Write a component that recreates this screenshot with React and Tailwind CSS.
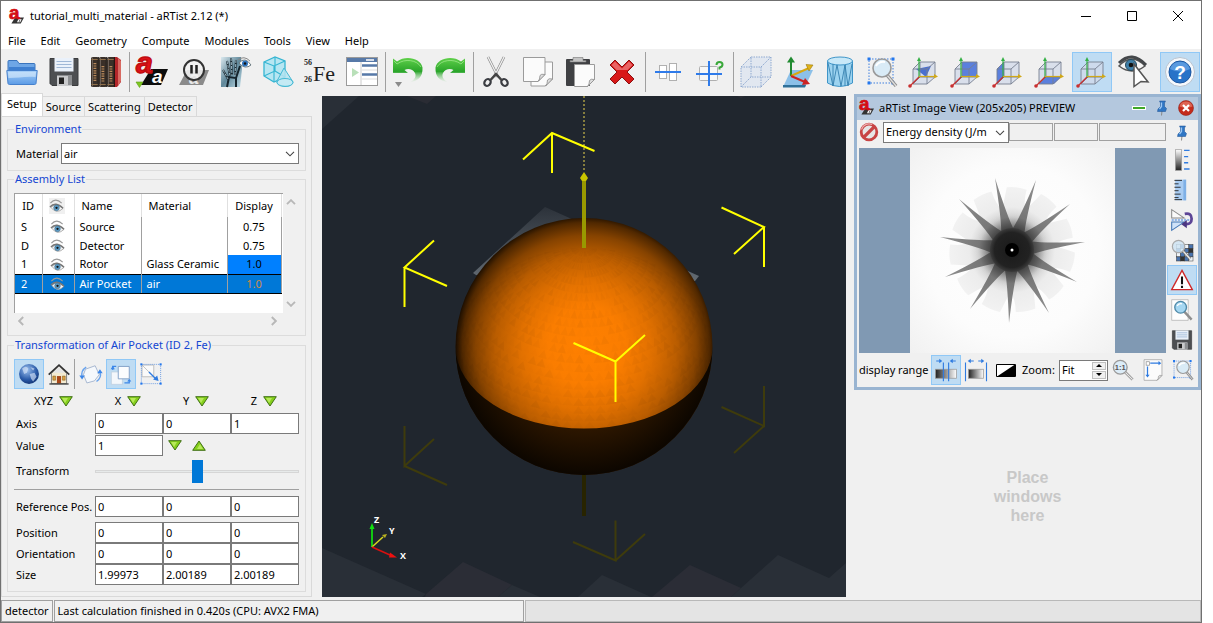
import React from "react";

/* ---------- icons ---------- */

function Svg({ size = 32, children, box = "0 0 32 32" }) {
  return (
    <svg width={size} height={size} viewBox={box} fill="none" aria-hidden="true" className="block shrink-0 overflow-visible">
      {children}
    </svg>
  );
}

function LogoIcon({ size = 16 }) {
  return (
    <Svg size={size}>
      <path d="M13 18h19l-7 13H5z" fill="#333" />
      <path d="M20 22h7l-3 6h-7z" fill="#fff" />
      <path d="M22 24h2l-1.500 3h-2z" fill="#333" />
      <text x="0" y="22" fontFamily="Liberation Sans, sans-serif" fontSize="40" fontWeight="bold" fill="#d40d12" stroke="#d40d12" strokeWidth="1.500">a</text>
    </Svg>
  );
}

function FolderIcon() {
  return (
    <Svg>
      <defs>
        <linearGradient id="fold" x1="0" y1="0" x2="0" y2="1">
          <stop offset="0" stopColor="#a9d0f7" />
          <stop offset="1" stopColor="#5b9be6" />
        </linearGradient>
      </defs>
      <path d="M2 16V5.500a1 1 0 0 1 1-1h8l2 3h15a1 1 0 0 1 1 1V16z" fill="#6ea6e6" stroke="#3a74bd" />
      <path d="M3 11h26v3H3z" fill="#3f7fd0" />
      <path d="M.8 14.500h30.400L30 27.500a1.500 1.500 0 0 1-1.500 1h-25A1.500 1.500 0 0 1 2 27.500z" fill="url(#fold)" stroke="#4580cc" />
      <path d="M2 16h28l-.5 5C20 20 12 22 2.500 22z" fill="#cfe5fb" opacity=".7" />
    </Svg>
  );
}

function FloppyIcon({ size = 32 }) {
  return (
    <Svg size={size}>
      <path d="M2 2.500h28v27H4L2 27.500z" fill="#4d4f52" stroke="#3b3c3e" />
      <path d="M6.500 2h19v13.500h-19z" fill="#eaf1fa" />
      <path d="M8.500 5.500h15M8.500 8.500h15M8.500 11.500h15" stroke="#9fb7d6" strokeWidth="1.200" />
      <path d="M9 19.500h15V30H9z" fill="#c9cacc" />
      <path d="M11 21.500h5V28h-5z" fill="#222" />
      <path d="M20 20h4v9h-4z" fill="#8b8d90" />
    </Svg>
  );
}

function BooksIcon() {
  return (
    <Svg>
      <path d="M23 1h4l4 3v22l-4 5h-4z" fill="#b3262a" />
      <path d="M28 2l3 3v20l-3 5z" fill="#d86a62" />
      {[1, 9, 17].map((x) => (
        <g key={x}>
          <rect x={x} y="1" width="7.500" height="30" rx="1.500" fill="#3a3029" />
          <path d={`M${x + 1.5} 1.500v29`} stroke="#6b6058" strokeWidth="1" />
          <path d={`M${x + 0.5} 3.500h6.500M${x + 0.5} 28.500h6.500`} stroke="#8f6f4a" />
          <path d={`M${x + 3.900} ${x === 1 ? 7 : 10}v${x === 1 ? 19 : 16}`} stroke="#b98a5c" strokeWidth="2.800" strokeDasharray="1.200 1.200" />
          <path d={`M${x + 7.300} 1v30`} stroke="#15100c" />
        </g>
      ))}
    </Svg>
  );
}

function RunIcon() {
  return (
    <Svg>
      <path d="M15 13h17l-7 16H5z" fill="#0d0d0d" />
      <text x="16" y="27" fontFamily="Liberation Sans, sans-serif" fontSize="19" fontWeight="bold" fontStyle="italic" fill="#fff">a</text>
      <text x="0" y="17" fontFamily="Liberation Sans, sans-serif" fontSize="30" fontWeight="bold" fontStyle="italic" fill="#e01217" stroke="#c00d12" strokeWidth="1.500">a</text>
      <path d="M0 26h7l-3.500 5.500z" fill="#7ec820" stroke="#5a9a14" strokeWidth=".6" />
    </Svg>
  );
}

function PauseIcon() {
  return (
    <Svg>
      <path d="M9 14h22l-6 15H1z" fill="#8b8b8b" />
      <text x="11" y="28" fontFamily="Liberation Sans, sans-serif" fontSize="18" fontWeight="bold" fontStyle="italic" fill="#e9e9e9">a</text>
      <circle cx="16" cy="14" r="10" fill="#f3f3f3" fillOpacity=".85" stroke="#333" strokeWidth="2" />
      <path d="M13.500 9v8.500M18.500 9v8.500" stroke="#222" strokeWidth="2.500" />
    </Svg>
  );
}

function XrayIcon() {
  return (
    <Svg>
      <defs>
        <linearGradient id="xr" x1="0" y1="0" x2="1" y2="1">
          <stop offset="0" stopColor="#dbe9ef" />
          <stop offset=".5" stopColor="#5f8799" />
          <stop offset="1" stopColor="#c3dfea" />
        </linearGradient>
      </defs>
      <path d="M1 1h20l1 12-2 18H1z" fill="url(#xr)" />
      <path d="M3 14l5 9M7 5l3 15M11 2l1 17M16 4l-1 15M20 10l-4 12M7 31l2-10 7 1v9" stroke="#15242c" strokeWidth="2" />
      <path d="M3 14l5 9M7 5l3 15M11 2l1 17M16 4l-1 15" stroke="#bcd7e3" strokeWidth=".8" strokeDasharray="3 1" />
      <path d="M19 7q6-7 12 2-6 5-12-2z" fill="#fff" stroke="#6b7a80" />
      <circle cx="25" cy="7.500" r="3" fill="#2f74bd" />
      <circle cx="25" cy="7.500" r="1.200" fill="#111" />
      <path d="M18 4q6-5 12 1" stroke="#888" />
    </Svg>
  );
}

function SolidsIcon() {
  return (
    <Svg>
      <path d="M2 6l11-5 10 4v16l-11 5-10-6z" fill="#a9e3f2" fillOpacity=".8" stroke="#35b5d2" strokeWidth="1.300" />
      <path d="M2 6l10 4 11-5M12 10v16M13 1v14L2 20M13 15l10 6" stroke="#35b5d2" strokeWidth="1.100" />
      <path d="M22 12l9 14q-1 5-9 4-8-1-7-5z" fill="#b5e4f1" fillOpacity=".85" stroke="#45b9d4" />
      <ellipse cx="23" cy="26.500" rx="8" ry="4" stroke="#45b9d4" fill="#c8edf6" fillOpacity=".6" />
    </Svg>
  );
}

function IronIcon() {
  return (
    <Svg>
      <text x="0" y="9" fontFamily="Liberation Serif, serif" fontSize="8" fontWeight="bold" fill="#222">56</text>
      <text x="0" y="26" fontFamily="Liberation Serif, serif" fontSize="8" fontWeight="bold" fill="#222">26</text>
      <text x="9" y="25" fontFamily="Liberation Serif, serif" fontSize="22" fill="#222">Fe</text>
    </Svg>
  );
}

function ListWinIcon() {
  return (
    <Svg>
      <rect x=".5" y="1.500" width="31" height="28" fill="#fff" stroke="#9a9a9a" />
      <path d="M1 2h30v4H1z" fill="#5779a8" />
      <path d="M20 4h8" stroke="#fff" strokeWidth="1.500" />
      <path d="M15 6v23" stroke="#ccc" />
      <path d="M6 12v9l7-4.500z" fill="#b9e0b9" />
      <path d="M16 9.500h15M16 18.500h15" stroke="#5779a8" strokeWidth="2.500" />
      <path d="M16 14h15M16 23h15" stroke="#ddd" />
    </Svg>
  );
}

function UndoIcon({ flip }) {
  const id = flip ? "redo" : "undo";
  return (
    <Svg>
      <defs>
        <linearGradient id={id} x1="0" y1="0" x2="0" y2="1">
          <stop offset="0" stopColor="#5fd04a" />
          <stop offset=".55" stopColor="#2aa52a" />
          <stop offset="1" stopColor="#9fd99f" stopOpacity="0" />
        </linearGradient>
      </defs>
      <g transform={flip ? "translate(32 0) scale(-1 1)" : ""}>
        <path d="M1 2.500l4 3c9-7 24-3 25.500 6C31 21 26 25 18 26.500c5-3 6.500-6 5-9.500-2-4-7-5-10.500-3l3.500 3H1z" fill={`url(#${id})`} />
        <path d="M2 5l3 3c8-6 20-4 24 3" stroke="#a5eb92" opacity=".7" />
        {!flip && <path d="M3 26h7l-3.500 5z" fill="#8b8b8b" />}
      </g>
    </Svg>
  );
}

function CutIcon() {
  return (
    <Svg>
      <path d="M8 1l10 20M24 1L14 21" stroke="#888" strokeWidth="2.600" />
      <path d="M8 1l10 20M24 1L14 21" stroke="#f2f2f2" strokeWidth="1.300" />
      <ellipse cx="7.500" cy="26.500" rx="3" ry="3.600" transform="rotate(35 7.500 26.500)" stroke="#3b3d42" strokeWidth="2.200" />
      <ellipse cx="24.500" cy="26.500" rx="3" ry="3.600" transform="rotate(-35 24.500 26.500)" stroke="#3b3d42" strokeWidth="2.200" />
      <path d="M10.500 24l5.500-6 5.500 6" stroke="#444" strokeWidth="2.500" />
    </Svg>
  );
}

function Page({ x, y, w, h }) {
  return (
    <g>
      <path d={`M${x} ${y}h${w}v${h - 7}l-7 7H${x}z`} fill="#fbfbfb" stroke="#9b9b9b" />
      <path d={`M${x + w} ${y + h - 7}q-4-1-5 1 0 4-2 6z`} fill="#ddd" stroke="#8b8b8b" strokeWidth=".8" />
    </g>
  );
}

function CopyIcon() {
  return (
    <Svg>
      <Page x={9} y={6} w={21.5} h={24} />
      <Page x={1.5} y={1.5} w={21.5} h={24} />
    </Svg>
  );
}

function PasteIcon() {
  return (
    <Svg>
      <rect x="2" y="3" width="24" height="27" rx="1" fill="#3f4043" />
      <path d="M9 1.500h10v3h3V6H6V4.500h3z" fill="#c4c4c4" stroke="#777" strokeWidth=".6" />
      <Page x={10.5} y={8.500} w={20} h={22} />
    </Svg>
  );
}

function DeleteIcon() {
  return (
    <Svg>
      <path d="M9 4l7 7 7-7 5 5-7 7 7 7-5 5-7-7-7 7-5-5 7-7-7-7z" fill="#d81818" stroke="#8c1010" strokeLinejoin="round" />
      <path d="M9 5.500l7 7 7-7 3.500 3.500-5 5h-11l-5-5z" fill="#f59a9a" opacity=".6" />
    </Svg>
  );
}

function AlignIcon() {
  return (
    <Svg>
      <rect x="7.500" y="9.500" width="7" height="13" fill="#fff" stroke="#b0b0b0" />
      <rect x="17.500" y="7.500" width="7" height="17" fill="#fff" stroke="#b0b0b0" />
      <path d="M3 16h26" stroke="#2f7bea" strokeWidth="2" />
    </Svg>
  );
}

function CenterIcon() {
  return (
    <Svg>
      <rect x="5.500" y="10.500" width="18" height="14" rx="1" fill="#f7f7f7" stroke="#b0b0b0" />
      <path d="M2 18h26M15 5v25" stroke="#2f7bea" strokeWidth="2" />
      <path d="M22.500 9q0-3 3-3t3 2.500q0 2.500-3 3v2" stroke="#3aa83a" strokeWidth="2" />
    </Svg>
  );
}

function WireBoxIcon() {
  return (
    <Svg>
      <path d="M1 11l10-10h20v20L21 31H1z" fill="#dde5f0" opacity=".8" />
      <path d="M1 11h20v20H1zM11 1h20v20H11zM1 11L11 1M21 11L31 1M21 31l10-10M1 31l10-10" stroke="#8fa9d0" strokeDasharray="1.500 1" />
    </Svg>
  );
}

function AxesIcon() {
  return (
    <Svg>
      <path d="M9 14h22l-8 17H1z" fill="#8cc0e8" />
      <path d="M1 29h23l-1 2.500H1z" fill="#2f7099" />
      <path d="M9 20V4" stroke="#208a30" strokeWidth="2" />
      <path d="M5 6.500L9 .5l4 6z" fill="#208a30" />
      <path d="M9 20l18-8" stroke="#d7a810" strokeWidth="2" />
      <path d="M24 8.500l7 .5-4 6z" fill="#e0b21a" stroke="#8b6a00" strokeWidth=".5" />
      <path d="M9 20l14 6" stroke="#cc2222" strokeWidth="2.200" />
      <path d="M23 22l5 6-8 1z" fill="#cc2222" />
    </Svg>
  );
}

function CylinderIcon() {
  return (
    <Svg>
      <path d="M3.500 5v22q12 7 25 0V5z" fill="#9cd3f0" stroke="#3f95c8" />
      <ellipse cx="16" cy="5" rx="12.500" ry="4" fill="#c8e8f8" stroke="#3f95c8" />
      <path d="M4 7l5 23 4-21 4 21 4-21 3 21 4-22M9 8v22M21 9v21" stroke="#347fae" strokeWidth=".9" />
    </Svg>
  );
}

function Corners({ a = 3, b = 27 }) {
  return (
    <g>
      <path d={`M${a} ${a}H${b}V${b}H${a}z`} stroke="#3c7ede" strokeDasharray="1.500 1.500" />
      {[[a, a], [b, a], [a, b], [b, b]].map(([x, y]) => (
        <rect key={`${x}-${y}`} x={x - 1.5} y={y - 1.5} width="3" height="3" fill="#2277ee" />
      ))}
    </g>
  );
}

function ZoomBoxIcon({ size = 32 }) {
  return (
    <Svg size={size}>
      <Corners />
      <path d="M21 19l9 11" stroke="#8f8f8f" strokeWidth="3.500" />
      <path d="M21 19l9 11" stroke="#e0e0e0" strokeWidth="1.200" />
      <circle cx="16" cy="12" r="9" fill="#d9ebf6" stroke="#999" strokeWidth="1.600" />
      <path d="M10 10q3-5 9-4" stroke="#fff" strokeWidth="2" />
    </Svg>
  );
}

function CubeView({ face }) {
  return (
    <Svg>
      <path d="M5 13l7-7h15v15l-8 7H5z" fill="#d2dae9" opacity=".75" />
      {face === "dir" && <path d="M8 13l15-3-5 11z" fill="#4a6fd0" />}
      {face === "back" && <path d="M12 6h15v15H12z" fill="#5b80dd" />}
      {face === "left" && <path d="M5 13l7-7v15l-7 7z" fill="#5b80dd" />}
      {face === "bottom" && <path d="M5 28l7-7h15l-7 7z" fill="#5b80dd" />}
      <path d="M5 13h14v15H5zM12 6h15v15H12zM5 13l7-7M19 13l8-7M19 28l8-7M5 28l7-7" stroke="#777f90" strokeWidth=".9" />
      <path d="M11 22V4" stroke="#35b045" strokeWidth="1.200" />
      <path d="M9 5l2-4 2 4z" fill="#35b045" />
      <path d="M11 20.500h16" stroke="#d0a818" strokeWidth="1.200" />
      <path d="M26 18l4 2.500-4 2z" fill="#d0a818" />
      <path d="M11 21l-9 9" stroke="#c83030" strokeWidth="1.200" />
      <circle cx="2" cy="30" r="1.800" fill="#c83030" />
    </Svg>
  );
}

function EyeCursorIcon() {
  return (
    <Svg>
      <path d="M1 10Q14-4 27 10q-13 10-26 0z" fill="#f5f5f5" stroke="#555" strokeWidth="1.500" />
      <path d="M1 7Q14-6 28 9" stroke="#44474a" strokeWidth="3" />
      <circle cx="13" cy="9" r="5.500" fill="#3f7fa8" stroke="#27485a" />
      <circle cx="13" cy="9" r="2.300" fill="#111" />
      <path d="M16 8l14 18-7-.5-7 5z" fill="#fff" stroke="#555" strokeWidth="1.500" />
    </Svg>
  );
}

function HelpIcon() {
  return (
    <Svg>
      <circle cx="16" cy="16" r="14.500" fill="#f5f8fc" stroke="#b9c3cf" />
      <circle cx="16" cy="16" r="11" fill="#2873c8" stroke="#1b56a0" />
      <path d="M6 13a10.500 10.500 0 0 1 20 0q-10 5-20 0z" fill="#6ea9e8" opacity=".7" />
      <text x="16" y="23" textAnchor="middle" fontFamily="Liberation Sans, sans-serif" fontSize="19" fontWeight="bold" fill="#fff">?</text>
    </Svg>
  );
}

function EyeIcon() {
  return (
    <Svg size={15} box="0 0 16 16">
      <path d="M2 10Q8 4 15 11q-7 7-13-1z" fill="#f4f4f4" stroke="#999" strokeWidth=".8" />
      <path d="M1 9.500Q7 3 15 11" stroke="#777" strokeWidth="1.500" />
      <path d="M1.500 5.500Q7-1 13.500 5.500" stroke="#999" strokeWidth="1.200" />
      <circle cx="8" cy="10.500" r="3" fill="#5a9ac4" stroke="#3b6a8a" strokeWidth=".6" />
      <circle cx="8" cy="10.500" r="1.200" fill="#111" />
    </Svg>
  );
}

function GlobeIcon() {
  return (
    <Svg size={22}>
      <defs>
        <radialGradient id="globe" cx=".4" cy=".3" r=".8">
          <stop offset="0" stopColor="#9cc0ee" />
          <stop offset=".6" stopColor="#2a5aa8" />
          <stop offset="1" stopColor="#0d2a66" />
        </radialGradient>
      </defs>
      <circle cx="16" cy="16" r="14.500" fill="url(#globe)" />
      <path d="M6 8q6-5 9 0l-2 6-4 2zM17 16l7-2 3 6-5 7-3-4zM18 6l6 2-2 3z" fill="#d5e3f7" opacity=".65" />
    </Svg>
  );
}

function HomeIcon() {
  return (
    <Svg size={22}>
      <path d="M5 15L16 4l11 11v15H5z" fill="#f3ead0" stroke="#555" />
      <path d="M1 17L16 3l15 14" stroke="#333" strokeWidth="2.500" />
      <path d="M7 14l9-9 9 9z" fill="#e4e4e4" />
      <path d="M13 19h6v11h-6z" fill="#a8481a" />
      <path d="M7 19h4v6H7zM21 19h4v6h-4z" fill="#d9a040" stroke="#7a5012" strokeWidth=".7" />
      <path d="M2 30.500h28" stroke="#444" strokeWidth="2" />
    </Svg>
  );
}

function RotateIcon() {
  return (
    <Svg size={22}>
      <path d="M8 9l14-5 6 13-7 9-11 3-5-12z" fill="#f5f8fc" stroke="#9fb2cc" strokeWidth="1.300" />
      <path d="M3 20Q1 11 9 6M29 13q3 8-5 14" stroke="#68a3ee" strokeWidth="2" />
      <path d="M-1 18l8 0-4 6zM33 15h-8l4-6z" fill="#3c86e8" />
    </Svg>
  );
}

function MoveIcon() {
  return (
    <Svg size={22}>
      <path d="M2 13h16v18H2z" fill="#f4f7fb" stroke="#bccbdc" />
      <path d="M12 5h16v18H12z" fill="#fbfcfe" stroke="#7d9cc4" strokeWidth="1.300" />
      <path d="M4 10V5h5M28 25v4h-7" stroke="#3c86e8" strokeWidth="1.800" />
      <path d="M1 9l3-5 3 5zM25 27l3-4 3 4z" fill="#3c86e8" />
    </Svg>
  );
}

function ScaleIcon() {
  return (
    <Svg size={22}>
      <path d="M3 3h17v17H3z" fill="#fafafa" stroke="#aaa" />
      <Corners a={2} b={30} />
      <path d="M3 3l20 20" stroke="#aaa" />
      <path d="M13 13l11 11" stroke="#2f7be0" strokeWidth="2" />
      <path d="M27 26l-8-2 6-6z" fill="#2f7be0" />
    </Svg>
  );
}

function Tri({ up }) {
  return (
    <svg width="14" height="11" viewBox="0 0 14 11" aria-hidden="true" className={up ? "block rotate-180" : "block"}>
      <path d="M.7.7h12.600L7 10z" fill="#86d01c" stroke="#3f6f14" strokeLinejoin="round" />
      <path d="M3 2h6L6 7z" fill="#c3ef6a" opacity=".8" />
    </svg>
  );
}

function PinIcon() {
  return (
    <Svg size={16}>
      <path d="M16 22l-1 9" stroke="#888" strokeWidth="2" />
      <path d="M11 2h12l-2 4v7l4 4-2 6H7l1-5 5-5V6z" fill="#2f76c4" stroke="#1b4f90" />
      <path d="M15 5v8l-4 5" stroke="#9cc8f5" strokeWidth="2.500" />
    </Svg>
  );
}

function CloseBall() {
  return (
    <Svg size={16}>
      <circle cx="16" cy="16" r="15" fill="#c42b1c" stroke="#8b1a10" />
      <path d="M3 13a13.500 13.500 0 0 1 26 0q-13 5-26 0z" fill="#ee8a78" opacity=".6" />
      <path d="M10 10l12 12M22 10L10 22" stroke="#fff" strokeWidth="4.500" />
    </Svg>
  );
}

function StopIcon() {
  return (
    <Svg size={20}>
      <circle cx="16" cy="16" r="12.500" fill="#e6e6e6" stroke="#c84444" strokeWidth="4.500" />
      <path d="M7 25L25 7" stroke="#c84444" strokeWidth="5.500" />
      <path d="M4 12a12.500 12.500 0 0 1 17-8" stroke="#eeb0b0" strokeWidth="2" />
    </Svg>
  );
}

function ScaleBarIcon() {
  return (
    <Svg size={22}>
      <defs>
        <linearGradient id="gray" x1="0" y1="0" x2="0" y2="1">
          <stop offset="0" stopColor="#fff" />
          <stop offset="1" stopColor="#222" />
        </linearGradient>
      </defs>
      <rect x="6.500" y="1" width="9" height="30" fill="url(#gray)" stroke="#999" />
      <path d="M19 2h8M19 11h6M19 20h6M19 29h8" stroke="#2f7be0" strokeWidth="2" />
    </Svg>
  );
}

function RulerIcon() {
  return (
    <Svg size={22}>
      <path d="M6 1h16v30H6z" fill="#a9ccf2" />
      <path d="M18 1h4v30h-4z" fill="#7fb0e6" />
      <path d="M5 2h11M5 7h6M5 12h9M5 17h6M5 22h9M5 27h6M5 30h11" stroke="#222" strokeWidth="1.300" />
    </Svg>
  );
}

function FlipIcon() {
  return (
    <Svg size={22}>
      <path d="M1 1v12h18z" fill="#fafafa" stroke="#888" strokeWidth="1.500" />
      <path d="M1 31V19h18z" fill="#cfe2f8" stroke="#3f74b4" strokeWidth="1.500" />
      <path d="M1 16h26" stroke="#2f7be0" strokeWidth="1.500" strokeDasharray="3 1.500" />
      <path d="M20 7q10-2 10 7t-9 8" stroke="#5d4596" strokeWidth="4" />
      <path d="M15 22l8-6v12z" fill="#4b3680" />
    </Svg>
  );
}

function PixelZoomIcon() {
  return (
    <Svg size={22}>
      {[0, 1, 2, 3].map((r) =>
        [0, 1, 2, 3].map((c) => (
          <rect key={`${r}${c}`} x={8 + c * 6} y={8 + r * 6} width="6" height="6" fill={(r + c) % 2 ? "#4a74ae" : (r * c) % 4 === 3 ? "#333" : "#eef3f8"} stroke="#333" strokeWidth=".7" />
        ))
      )}
      <path d="M18 18l10 11" stroke="#777" strokeWidth="4" />
      <path d="M18 18l10 11" stroke="#eee" strokeWidth="2" />
      <circle cx="11" cy="11" r="9" fill="#cfe4f3" fillOpacity=".85" stroke="#aaa" strokeWidth="1.800" />
    </Svg>
  );
}

function WarnIcon() {
  return (
    <Svg size={22}>
      <path d="M16 2L31 30H1z" fill="#fff" stroke="#cf2a2a" strokeWidth="2" />
      <path d="M16 11v11M16 24.500v3" stroke="#111" strokeWidth="3" />
    </Svg>
  );
}

function DocZoomIcon() {
  return (
    <Svg size={22}>
      <path d="M1 1h24v30H1z" fill="#fdfdfd" stroke="#aaa" />
      <path d="M19 18l11 12" stroke="#8f8f8f" strokeWidth="3.500" />
      <circle cx="14" cy="12" r="8.500" fill="#a5d7f2" stroke="#4e89a8" strokeWidth="2" />
      <path d="M9 10q2-4 7-3" stroke="#fff" strokeWidth="2" />
    </Svg>
  );
}

function RangeIcon({ narrow }) {
  const id = narrow ? "rngA" : "rngB";
  return (
    <Svg size={24}>
      <defs>
        <linearGradient id={id}>
          <stop offset="0" stopColor="#222" />
          <stop offset="1" stopColor="#fff" />
        </linearGradient>
      </defs>
      <rect x={narrow ? 2 : 6} y="15" width={narrow ? 28 : 20} height="12" fill={`url(#${id})`} stroke="#999" />
      {narrow ? (
        <path d="M12.500 6v25M19.500 6v25M3 4h6M29 4h-6" stroke="#2f7be0" strokeWidth="1.500" />
      ) : (
        <path d="M2 6v25M30 6v25M8 4h5M24 4h-5" stroke="#2f7be0" strokeWidth="1.500" />
      )}
      {narrow ? (
        <path d="M7 1l4 3-4 3zM25 1l-4 3 4 3z" fill="#2f7be0" />
      ) : (
        <path d="M9 1L5 4l4 3zM23 1l4 3-4 3z" fill="#2f7be0" />
      )}
    </Svg>
  );
}

function InvertIcon() {
  return (
    <svg width="20" height="13" viewBox="0 0 20 13" aria-hidden="true" className="block shrink-0">
      <path d="M.5.5h19v12H.5z" fill="#fff" stroke="#000" />
      <path d="M1 12.500L19 .5v12z" fill="#000" />
    </svg>
  );
}

function OneToOneIcon() {
  return (
    <Svg size={22}>
      <path d="M19 19l11 11" stroke="#8f8f8f" strokeWidth="4" />
      <path d="M19 19l11 11" stroke="#eee" strokeWidth="1.500" />
      <circle cx="12" cy="12" r="10" fill="#dcecf7" stroke="#999" strokeWidth="2" />
      <text x="12" y="16" textAnchor="middle" fontFamily="Liberation Sans, sans-serif" fontSize="11" fontWeight="bold" fill="#555">1:1</text>
    </Svg>
  );
}

function PageSizeIcon() {
  return (
    <Svg size={22}>
      <Page x={3} y={1} w={26} h={30} />
      <path d="M12 6h13M8 11v13" stroke="#2f7be0" strokeWidth="1.800" />
      <path d="M24 3l4 3-4 3zM5 23l3 4 3-4z" fill="#2f7be0" />
      <rect x="6" y="4" width="5" height="5" fill="#fff" stroke="#888" />
    </Svg>
  );
}

function Chevron({ dir = "down", faint }) {
  const turn = { down: "", up: "rotate-180", left: "rotate-90", right: "-rotate-90" }[dir];
  return (
    <svg width="10" height="6" viewBox="0 0 10 6" fill="none" aria-hidden="true" className={`block ${turn}`}>
      <path d="M1 .8l4 4 4-4" stroke={faint ? "#b8b8b8" : "#444"} strokeWidth={faint ? 1.9 : 1.1} />
    </svg>
  );
}

/* ---------- controls ---------- */

function ToolButton({ label, active, children }) {
  return (
    <button
      type="button"
      aria-label={label}
      className={`mx-px flex h-10 w-10 items-center justify-center border ${active ? "border-[#90c8f6] bg-[#bfdcf3]" : "border-transparent"}`}
    >
      {children}
    </button>
  );
}

function SmallButton({ label, active, children }) {
  return (
    <button
      type="button"
      aria-label={label}
      className={`flex h-[30px] w-[30px] shrink-0 items-center justify-center border ${active ? "border-[#90c8f6] bg-[#bfdcf3]" : "border-transparent"}`}
    >
      {children}
    </button>
  );
}

function ToolSep() {
  return (
    <div className="flex h-10 w-1 justify-center">
      <div className="w-px bg-[#a0a0a0]" />
    </div>
  );
}

const TOOLS = [
  ["Open", <FolderIcon />], ["Save", <FloppyIcon />], ["Material library", <BooksIcon />], null,
  ["Run", <RunIcon />], ["Pause", <PauseIcon />], ["Radiograph", <XrayIcon />], ["Solids", <SolidsIcon />],
  ["Materials", <IronIcon />], ["Batch", <ListWinIcon />], null,
  ["Undo", <UndoIcon />], ["Redo", <UndoIcon flip />], null,
  ["Cut", <CutIcon />], ["Copy", <CopyIcon />], ["Paste", <PasteIcon />], ["Delete", <DeleteIcon />], null,
  ["Align", <AlignIcon />], ["Center", <CenterIcon />], null,
  ["Bounding box", <WireBoxIcon />], ["Axes", <AxesIcon />], ["Wireframe", <CylinderIcon />], ["Zoom to fit", <ZoomBoxIcon />],
  ["View direction", <CubeView face="dir" />], ["View back", <CubeView face="back" />], ["View left", <CubeView face="left" />],
  ["View bottom", <CubeView face="bottom" />], ["View free", <CubeView />, true], ["Pick", <EyeCursorIcon />],
];

function Toolbar() {
  return (
    <div className="flex h-11 shrink-0 items-center bg-[#f0f0f0] pt-0.5">
      {TOOLS.map((t, i) =>
        t ? <ToolButton key={t[0]} label={t[0]} active={t[2]}>{t[1]}</ToolButton> : <ToolSep key={i} />
      )}
      <div className="ml-1">
        <ToolButton label="Help" active><HelpIcon /></ToolButton>
      </div>
    </div>
  );
}

function Group({ title, className = "", children }) {
  return (
    <fieldset className={`min-w-0 border border-[#dcdcdc] px-1.5 ${className}`}>
      <legend className="px-px leading-4 text-[#1446d2]">{title}</legend>
      {children}
    </fieldset>
  );
}

function Field({ value, label }) {
  return (
    <input
      aria-label={label}
      defaultValue={value}
      className="h-[21px] w-0 min-w-0 flex-1 border border-[#7a7a7a] bg-white px-0.5 text-black outline-none"
    />
  );
}

function FieldRow({ label, values, className = "" }) {
  return (
    <div className={`flex items-center ${className}`}>
      <span className="w-[79px] shrink-0 whitespace-nowrap">{label}</span>
      {values.map((v, i) => (
        <Field key={i} value={v} label={`${label} ${"XYZ"[i]}`} />
      ))}
    </div>
  );
}

const ROWS = [
  ["S", "Source", "", "0.75"],
  ["D", "Detector", "", "0.75"],
  ["1", "Rotor", "Glass Ceramic", "1.0"],
  ["2", "Air Pocket", "air", "1.0"],
];

function AssemblyTable() {
  return (
    <div className="flex">
      <div className="h-[120px] min-w-0 flex-1 border-t border-l border-[#a0a0a0] bg-white">
        <table className="w-[266px] table-fixed border-collapse">
          <colgroup>
            <col className="w-[27px]" />
            <col className="w-8" />
            <col className="w-[67px]" />
            <col className="w-[86px]" />
            <col className="w-[54px]" />
          </colgroup>
          <thead>
            <tr className="h-[23px]">
              <th className="border-r border-[#e0e0e0] p-0 font-normal">ID</th>
              <th className="border-r border-[#e0e0e0] p-0 font-normal">
                <span className="ml-1.5 flex h-4 w-4 items-center justify-center bg-[#f0f0f0]"><EyeIcon /></span>
              </th>
              <th className="border-r border-[#e0e0e0] p-0 pl-[7px] text-left font-normal">Name</th>
              <th className="border-r border-[#e0e0e0] p-0 pl-[7px] text-left font-normal">Material</th>
              <th className="border-r border-[#e0e0e0] p-0 font-normal">Display</th>
            </tr>
          </thead>
          <tbody>
            {ROWS.map(([id, name, mat, disp]) => {
              const sel = id === "2";
              const cell = sel
                ? "border-y border-y-black border-r border-r-[#a0a0a0] p-0"
                : "border-r border-[#a0a0a0] p-0";
              return (
                <tr key={id} className={`h-[19px] ${sel ? "bg-[#0078d7] text-white" : ""}`}>
                  <td className={`${cell} pl-1.5`}>{id}</td>
                  <td className={cell}><span className="ml-[7px] flex"><EyeIcon /></span></td>
                  <td className={`${cell} pl-[5px] whitespace-nowrap`}>{name}</td>
                  <td className={`${cell} pl-[5px] whitespace-nowrap`}>{mat}</td>
                  <td className={`${cell} text-center ${sel ? "text-[#d08a4a]" : id === "1" ? "bg-[#0080ff]" : ""}`}>{disp}</td>
                </tr>
              );
            })}
          </tbody>
        </table>
      </div>
      <div className="flex w-4 flex-col items-center justify-between py-1.5">
        <Chevron dir="up" faint />
        <Chevron faint />
      </div>
    </div>
  );
}

function LeftPanel() {
  return (
    <aside className="flex w-[311px] shrink-0 flex-col">
      <div className="flex items-end">
        {["Setup", "Source", "Scattering", "Detector"].map((t, i) => (
          <button
            key={t}
            type="button"
            className={
              i === 0
                ? "h-[23px] border border-b-0 border-[#d9d9d9] bg-white px-[5px] pb-0.5"
                : "h-5 border border-b-0 border-l-0 border-[#d9d9d9] bg-[#f0f0f0] px-[3px]"
            }
          >
            {t}
          </button>
        ))}
      </div>
      <div className="flex-1 border border-[#d9d9d9] px-1 pt-1">
        <div className="px-px">
          <Group title="Environment" className="pb-1.5">
            <div className="flex items-center pt-1.5 pl-0.5">
              <label htmlFor="env-material" className="w-[45px] shrink-0 whitespace-nowrap">Material</label>
              <div className="relative flex-1">
                <select id="env-material" className="block h-[21px] w-full appearance-none border border-[#7a7a7a] bg-white px-0.5 outline-none">
                  <option>air</option>
                </select>
                <span className="pointer-events-none absolute top-2 right-1"><Chevron /></span>
              </div>
            </div>
          </Group>
          <Group title="Assembly List">
            <div className="pt-1.5">
              <AssemblyTable />
              <div className="flex h-[22px] items-center justify-between pr-5 pb-1.5 pl-0.5">
                <Chevron dir="left" faint />
                <Chevron dir="right" faint />
              </div>
            </div>
          </Group>
          <Group title="Transformation of Air Pocket (ID 2, Fe)" className="mt-px pb-1.5">
            <div className="flex items-center pt-1.5">
              <SmallButton label="World coordinates" active><GlobeIcon /></SmallButton>
              <SmallButton label="Home"><HomeIcon /></SmallButton>
              <div className="mr-px h-[30px] w-px bg-[#a0a0a0]" />
              <SmallButton label="Rotate"><RotateIcon /></SmallButton>
              <SmallButton label="Translate" active><MoveIcon /></SmallButton>
              <SmallButton label="Scale"><ScaleIcon /></SmallButton>
            </div>
            <div className="flex h-6 items-center pl-0.5">
              {["XYZ", "X", "Y", "Z"].map((t, i) => (
                <button key={t} type="button" className={`flex items-center justify-center gap-1.5 ${i ? "flex-1 pr-0.5" : "w-[79px] pr-1"}`}>
                  {t} <Tri />
                </button>
              ))}
            </div>
            <FieldRow label="Axis" values={["0", "0", "1"]} className="pl-0.5" />
            <div className="mt-px flex items-center pl-0.5">
              <label htmlFor="step-value" className="w-[79px] shrink-0">Value</label>
              <input id="step-value" defaultValue="1" className="h-[21px] w-[68px] border border-[#7a7a7a] bg-white px-0.5 outline-none" />
              <button type="button" aria-label="Decrease" className="ml-[5px]"><Tri /></button>
              <button type="button" aria-label="Increase" className="ml-2.5"><Tri up /></button>
            </div>
            <div className="mt-[3px] flex h-6 items-center pl-0.5">
              <label htmlFor="transform" className="w-[79px] shrink-0">Transform</label>
              <input
                id="transform"
                type="range"
                defaultValue="50"
                className="h-6 min-w-0 flex-1 appearance-none bg-transparent [&::-webkit-slider-runnable-track]:h-[3px] [&::-webkit-slider-runnable-track]:border [&::-webkit-slider-runnable-track]:border-[#d6d6d6] [&::-webkit-slider-runnable-track]:bg-[#e7eaea] [&::-webkit-slider-thumb]:-mt-[11px] [&::-webkit-slider-thumb]:h-[23px] [&::-webkit-slider-thumb]:w-[11px] [&::-webkit-slider-thumb]:appearance-none [&::-webkit-slider-thumb]:bg-[#0078d7]"
              />
            </div>
            <div className="mt-1.5 h-px bg-[#a0a0a0]" />
            <FieldRow label="Reference Pos." values={["0", "0", "0"]} className="mt-1.5 pl-0.5" />
            <FieldRow label="Position" values={["0", "0", "0"]} className="mt-[5px] pl-0.5" />
            <FieldRow label="Orientation" values={["0", "0", "0"]} className="pl-0.5" />
            <FieldRow label="Size" values={["1.99973", "2.00189", "2.00189"]} className="pl-0.5" />
          </Group>
        </div>
      </div>
    </aside>
  );
}

/* ---------- 3D scene ---------- */

const FACETS = [];
for (let lat = 0; lat < 88; lat += 4) {
  for (let lon = 180; lon < 360; lon += 5) {
    const shade = Math.abs(Math.sin(lat * 12.9 + lon * 78.2) * 43758.5) % 1;
    const p = (la, lo) => {
      const f = (la * Math.PI) / 180;
      const l = (lo * Math.PI) / 180;
      const x = 128 * Math.cos(f) * Math.cos(l);
      const y = -99 * Math.sin(f) - 82 * Math.cos(f) * Math.sin(l);
      return `${(262 + x).toFixed(1)} ${(250.5 + y).toFixed(1)}`;
    };
    FACETS.push([`M${p(lat, lon)}L${p(lat, lon + 5)} ${p(lat + 4, lon + 2.5)}z`, shade]);
  }
}

function Scene() {
  return (
    <svg viewBox="0 0 524 501" preserveAspectRatio="xMidYMid slice" className="block h-full w-full bg-[#20262e]" role="img" aria-label="3D scene">
      <defs>
        <radialGradient id="ball" gradientUnits="userSpaceOnUse" cx="264" cy="250" r="130">
          <stop offset="0" stopColor="#ff8000" />
          <stop offset=".3" stopColor="#fa7d00" />
          <stop offset=".5" stopColor="#e27100" />
          <stop offset=".7" stopColor="#ba5d00" />
          <stop offset=".85" stopColor="#864300" />
          <stop offset=".95" stopColor="#502800" />
          <stop offset="1" stopColor="#1e0f00" />
        </radialGradient>
        <radialGradient id="ballDark" gradientUnits="userSpaceOnUse" cx="262" cy="250" r="129">
          <stop offset="0" stopColor="#351b00" />
          <stop offset=".65" stopColor="#2c1600" />
          <stop offset="1" stopColor="#0c0600" />
        </radialGradient>
        <linearGradient id="tile" gradientUnits="userSpaceOnUse" x1="223" y1="111" x2="223" y2="184">
          <stop offset="0" stopColor="#2c323a" />
          <stop offset="1" stopColor="#626a72" />
        </linearGradient>
      </defs>
      <path d="M0 0h37L0 33z" fill="#292f37" />
      <path d="M85 0h29l-9 8z" fill="#2a2c34" />
      <path d="M415 0h8l-4 2z" fill="#2a2c34" />
      <path d="M0 452l104 46-4 3H0z" fill="#292f37" />
      <path d="M104 498l37-32 49 23-14 12h-73z" fill="#2b2d36" />
      <path d="M190 489l28 12h-42z" fill="#292f37" />
      <path d="M256 501l24-22 49 22z" fill="#292f37" />
      <path d="M330 501l38-32 51 23-10 9z" fill="#2b2d36" />
      <path d="M409 501l10-9 37-33 51 23 17-15v34z" fill="#292f37" />
      <path d="M223 111l154 69-4 5-60 10-159-16-3-2z" fill="url(#tile)" />
      <path d="M262 0v76" stroke="#857d3e" strokeWidth="2" strokeDasharray="2 2" />
      <path d="M262 379v41" stroke="#282400" strokeWidth="4" />
      <circle cx="262" cy="250.500" r="128.500" fill="url(#ball)" />
      {FACETS.map(([d, s], i) => (
        <path key={i} d={d} fill="#000" fillOpacity={s * 0.035} />
      ))}
      <path d="M133.500 250.500A128.500 82 0 0 0 390.500 250.500A128.500 128.500 0 0 1 133.500 250.500z" fill="url(#ballDark)" />
      <path d="M262 84v68" stroke="#999900" strokeWidth="4" />
      <path d="M262 76l4 6-2 3h-4l-2-3z" fill="#c8c400" />
      <g stroke="#ffff00" strokeWidth="2" fill="none">
        <path d="M201 63.500L230 37l42.500 18M230 37v40" />
        <path d="M112 144.500L82.500 171.500 125 190M82.500 171.500V211" />
        <path d="M399.500 111.500L442 131l-30 27M442 131v40" />
        <path d="M251.500 247l42 18.500L323 239M293.500 265.500V306" />
      </g>
      <g stroke="#3e3b0c" strokeWidth="2" fill="none">
        <path d="M82.500 330v40L112 343M82.500 370L125 389" />
        <path d="M442 290v40L399.500 311M442 330l-30 27" />
        <path d="M293.500 424.500v40L251 446M293.500 464.500L323 438" />
      </g>
      <path d="M50 451v-19" stroke="#12c812" strokeWidth="2" />
      <path d="M47.500 433l2.500-6 2.500 6z" fill="#12e012" />
      <path d="M50 451l11-10" stroke="#d8d820" strokeWidth="1.500" />
      <path d="M60 439l5-1-2 4z" fill="#b8b020" />
      <path d="M50 451l18 8" stroke="#d81010" strokeWidth="1.500" />
      <path d="M68 456.500l7 5-8 0z" fill="#f01010" />
      <g fill="#fff" fontFamily="Open Sans, sans-serif" fontSize="9" fontWeight="bold">
        <text x="52" y="426.500">Z</text>
        <text x="67" y="438">Y</text>
        <text x="78" y="462.500">X</text>
      </g>
    </svg>
  );
}

/* ---------- image view ---------- */

const HUB = [153, 102];
const TIPS = [
  [136, 30], [177, 32], [211, 56], [226, 94], [218, 134], [190, 165],
  [150, 175], [111, 161], [86, 129], [81, 89], [100, 51],
];
const at = (a, r) => `${(HUB[0] + r * Math.cos(a)).toFixed(1)} ${(HUB[1] + r * Math.sin(a)).toFixed(1)}`;

function Rotor() {
  return (
    <svg viewBox="0 0 307 205" preserveAspectRatio="xMidYMid meet" className="block h-[205px] w-full bg-[#8099b3]" role="img" aria-label="Radiograph">
      <defs>
        <radialGradient id="field" cx=".5" cy=".5" r=".7">
          <stop offset="0" stopColor="#fff" />
          <stop offset=".6" stopColor="#fcfcfc" />
          <stop offset="1" stopColor="#f1f1f1" />
        </radialGradient>
        <radialGradient id="spike" gradientUnits="userSpaceOnUse" cx="153" cy="102" r="74">
          <stop offset=".25" stopColor="#383838" />
          <stop offset=".45" stopColor="#767676" />
          <stop offset="1" stopColor="#929292" />
        </radialGradient>
        <radialGradient id="blade" gradientUnits="userSpaceOnUse" cx="153" cy="102" r="66">
          <stop offset=".3" stopColor="#888" />
          <stop offset=".5" stopColor="#d4d4d4" />
          <stop offset=".65" stopColor="#ececec" />
          <stop offset="1" stopColor="#f3f3f3" />
        </radialGradient>
        <radialGradient id="glow" gradientUnits="userSpaceOnUse" cx="153" cy="102" r="38">
          <stop offset=".5" stopColor="#444" stopOpacity=".75" />
          <stop offset=".75" stopColor="#888" stopOpacity=".35" />
          <stop offset="1" stopColor="#ddd" stopOpacity="0" />
        </radialGradient>
        <radialGradient id="hub">
          <stop offset="0" stopColor="#1a1a1a" />
          <stop offset=".8" stopColor="#222" />
          <stop offset="1" stopColor="#3c3c3c" />
        </radialGradient>
      </defs>
      <rect x="51" width="205" height="205" fill="url(#field)" />
      {TIPS.map(([x, y], i) => {
        const a = Math.atan2(y - HUB[1], x - HUB[0]);
        return (
          <path
            key={i}
            d={`M${at(a, 20)}L${at(a + 0.04, 46)}L${at(a + 0.15, 63)}Q${at(a + 0.3, 64)} ${at(a + 0.47, 62)}Q${at(a + 0.46, 50)} ${at(a + 0.56, 42)}L${at(a + 0.57, 20)}z`}
            fill="url(#blade)"
          />
        );
      })}
      <circle cx="153" cy="102" r="38" fill="url(#glow)" />
      {TIPS.map(([x, y], i) => {
        const a = Math.atan2(y - HUB[1], x - HUB[0]);
        return <path key={i} d={`M${at(a - 0.34, 20)}Q${at(a - 0.1, 32)} ${x} ${y}Q${at(a + 0.1, 32)} ${at(a + 0.34, 20)}z`} fill="url(#spike)" />;
      })}
      <circle cx="153" cy="102" r="22" fill="url(#hub)" />
      <circle cx="153" cy="102" r="7" fill="#000" />
      <circle cx="153" cy="102" r="1.500" fill="#fff" />
    </svg>
  );
}

function ImageView() {
  return (
    <section className="border-[3px] border-[#99b4d1] bg-[#f0f0f0]">
      <div className="flex h-[23px] items-center bg-[#b4c8de] pr-1 pb-0.5 pl-0.5">
        <LogoIcon size={15} />
        <h2 className="ml-[5px] flex-1 whitespace-nowrap">aRTist Image View (205x205) PREVIEW</h2>
        <button type="button" aria-label="Minimize" className="mr-2 h-1 w-3.5 border border-white bg-[#3fa828]" />
        <button type="button" aria-label="Pin" className="mr-2"><PinIcon /></button>
        <button type="button" aria-label="Close view"><CloseBall /></button>
      </div>
      <div className="flex pl-0.5">
        <div className="min-w-0 flex-1">
          <div className="flex h-7 items-center pb-1">
            <button type="button" aria-label="Stop" className="mr-1"><StopIcon /></button>
            <div className="relative w-[126px]">
              <select aria-label="Quantity" className="block h-[21px] w-full appearance-none border border-[#7a7a7a] bg-white pr-4 pl-0.5 outline-none">
                <option>Energy density (J/m</option>
              </select>
              <span className="pointer-events-none absolute top-2 right-1"><Chevron /></span>
            </div>
            <div className="flex flex-1 gap-px">
              <div className="h-[18px] w-11 border border-[#a0a0a0]" />
              <div className="h-[18px] w-11 border border-[#a0a0a0]" />
              <div className="h-[18px] flex-1 border border-[#a0a0a0]" />
            </div>
          </div>
          <Rotor />
        </div>
        <div className="flex w-8 shrink-0 flex-col items-center">
          <div className="flex h-[25px] items-center"><button type="button" aria-label="Pin toolbar"><PinIcon /></button></div>
          <SmallButton label="Scale bar"><ScaleBarIcon /></SmallButton>
          <SmallButton label="Ruler"><RulerIcon /></SmallButton>
          <SmallButton label="Flip"><FlipIcon /></SmallButton>
          <SmallButton label="Pixels"><PixelZoomIcon /></SmallButton>
          <SmallButton label="Warnings" active><WarnIcon /></SmallButton>
          <SmallButton label="Inspect"><DocZoomIcon /></SmallButton>
          <SmallButton label="Save image"><FloppyIcon size={22} /></SmallButton>
        </div>
      </div>
      <div className="flex h-8 items-center pb-0.5 pl-0.5">
        <span className="w-[72px] shrink-0 whitespace-nowrap">display range</span>
        <SmallButton label="Narrow range" active><RangeIcon narrow /></SmallButton>
        <SmallButton label="Widen range"><RangeIcon /></SmallButton>
        <SmallButton label="Invert"><InvertIcon /></SmallButton>
        <label htmlFor="zoom" className="ml-px w-[37px] shrink-0">Zoom:</label>
        <div className="flex h-[21px] w-[49px] border border-[#7a7a7a] bg-white">
          <input id="zoom" defaultValue="Fit" className="w-0 min-w-0 flex-1 px-0.5 outline-none" />
          <div className="flex w-4 flex-col gap-px p-px">
            {[true, false].map((up) => (
              <button key={String(up)} type="button" aria-label={up ? "Zoom in" : "Zoom out"} className="flex flex-1 items-center justify-center border border-[#c0c0c0] bg-[#f0f0f0]">
                <svg width="6" height="3" viewBox="0 0 6 3" aria-hidden="true" className={up ? "rotate-180" : ""}><path d="M0 0h6L3 3z" fill="#000" /></svg>
              </button>
            ))}
          </div>
        </div>
        <div className="flex-1" />
        <SmallButton label="Original size"><OneToOneIcon /></SmallButton>
        <SmallButton label="Page size"><PageSizeIcon /></SmallButton>
        <SmallButton label="Zoom to window"><ZoomBoxIcon size={22} /></SmallButton>
      </div>
    </section>
  );
}

/* ---------- window ---------- */

export default function App() {
  return (
    <div className="h-screen min-h-[623px] bg-white pr-[11px] font-['Noto_Sans','Open_Sans',sans-serif] text-[11px] leading-4 text-black">
      <div className="flex h-full flex-col border border-[#707070] bg-[#f0f0f0]">
        <header className="flex h-[30px] shrink-0 items-center bg-white pl-2">
          <LogoIcon size={15} />
          <h1 className="ml-1.5 flex-1">tutorial_multi_material - aRTist 2.12 (*)</h1>
          {[
            ["Minimize window", "M0 5.500h10"],
            ["Maximize window", "M.5.5h9v9h-9z"],
            ["Close window", "M0 0l10 10M10 0L0 10"],
          ].map(([label, d]) => (
            <button key={label} type="button" aria-label={label} className="flex h-7 w-[46px] items-center justify-center">
              <svg width="10" height="10" viewBox="0 0 10 10" fill="none" aria-hidden="true"><path d={d} stroke="#000" /></svg>
            </button>
          ))}
        </header>
        <nav className="flex h-[18px] shrink-0 items-center bg-white pt-0.5 pl-[7px]">
          <div className="flex items-center gap-[15px]">
            {["File", "Edit", "Geometry", "Compute", "Modules", "Tools", "View", "Help"].map((m) => (
              <button key={m} type="button">{m}</button>
            ))}
          </div>
        </nav>
        <Toolbar />
        <main className="flex min-h-0 flex-1 pb-[3px]">
          <LeftPanel />
          <div className="min-w-0 flex-1 pt-[3px] pr-2 pl-2.5">
            <Scene />
          </div>
          <div className="flex w-[347px] shrink-0 flex-col pt-px">
            <ImageView />
            <div className="flex flex-1 items-center justify-center pt-1.5">
              <p className="w-20 text-center font-['Liberation_Sans',sans-serif] text-base leading-[19px] font-bold text-[#c8c8c8]">
                Place windows here
              </p>
            </div>
          </div>
        </main>
        <footer className="flex h-[22px] shrink-0 gap-px">
          <div className="border border-[#a0a0a0] px-[3px] leading-5">detector</div>
          <div className="w-[470px] border border-[#a0a0a0] px-[3px] leading-5">Last calculation finished in 0.420s (CPU: AVX2 FMA)</div>
          <div className="flex-1 border border-[#b8b8b8] bg-[#e4e4e4]" />
        </footer>
      </div>
    </div>
  );
}
